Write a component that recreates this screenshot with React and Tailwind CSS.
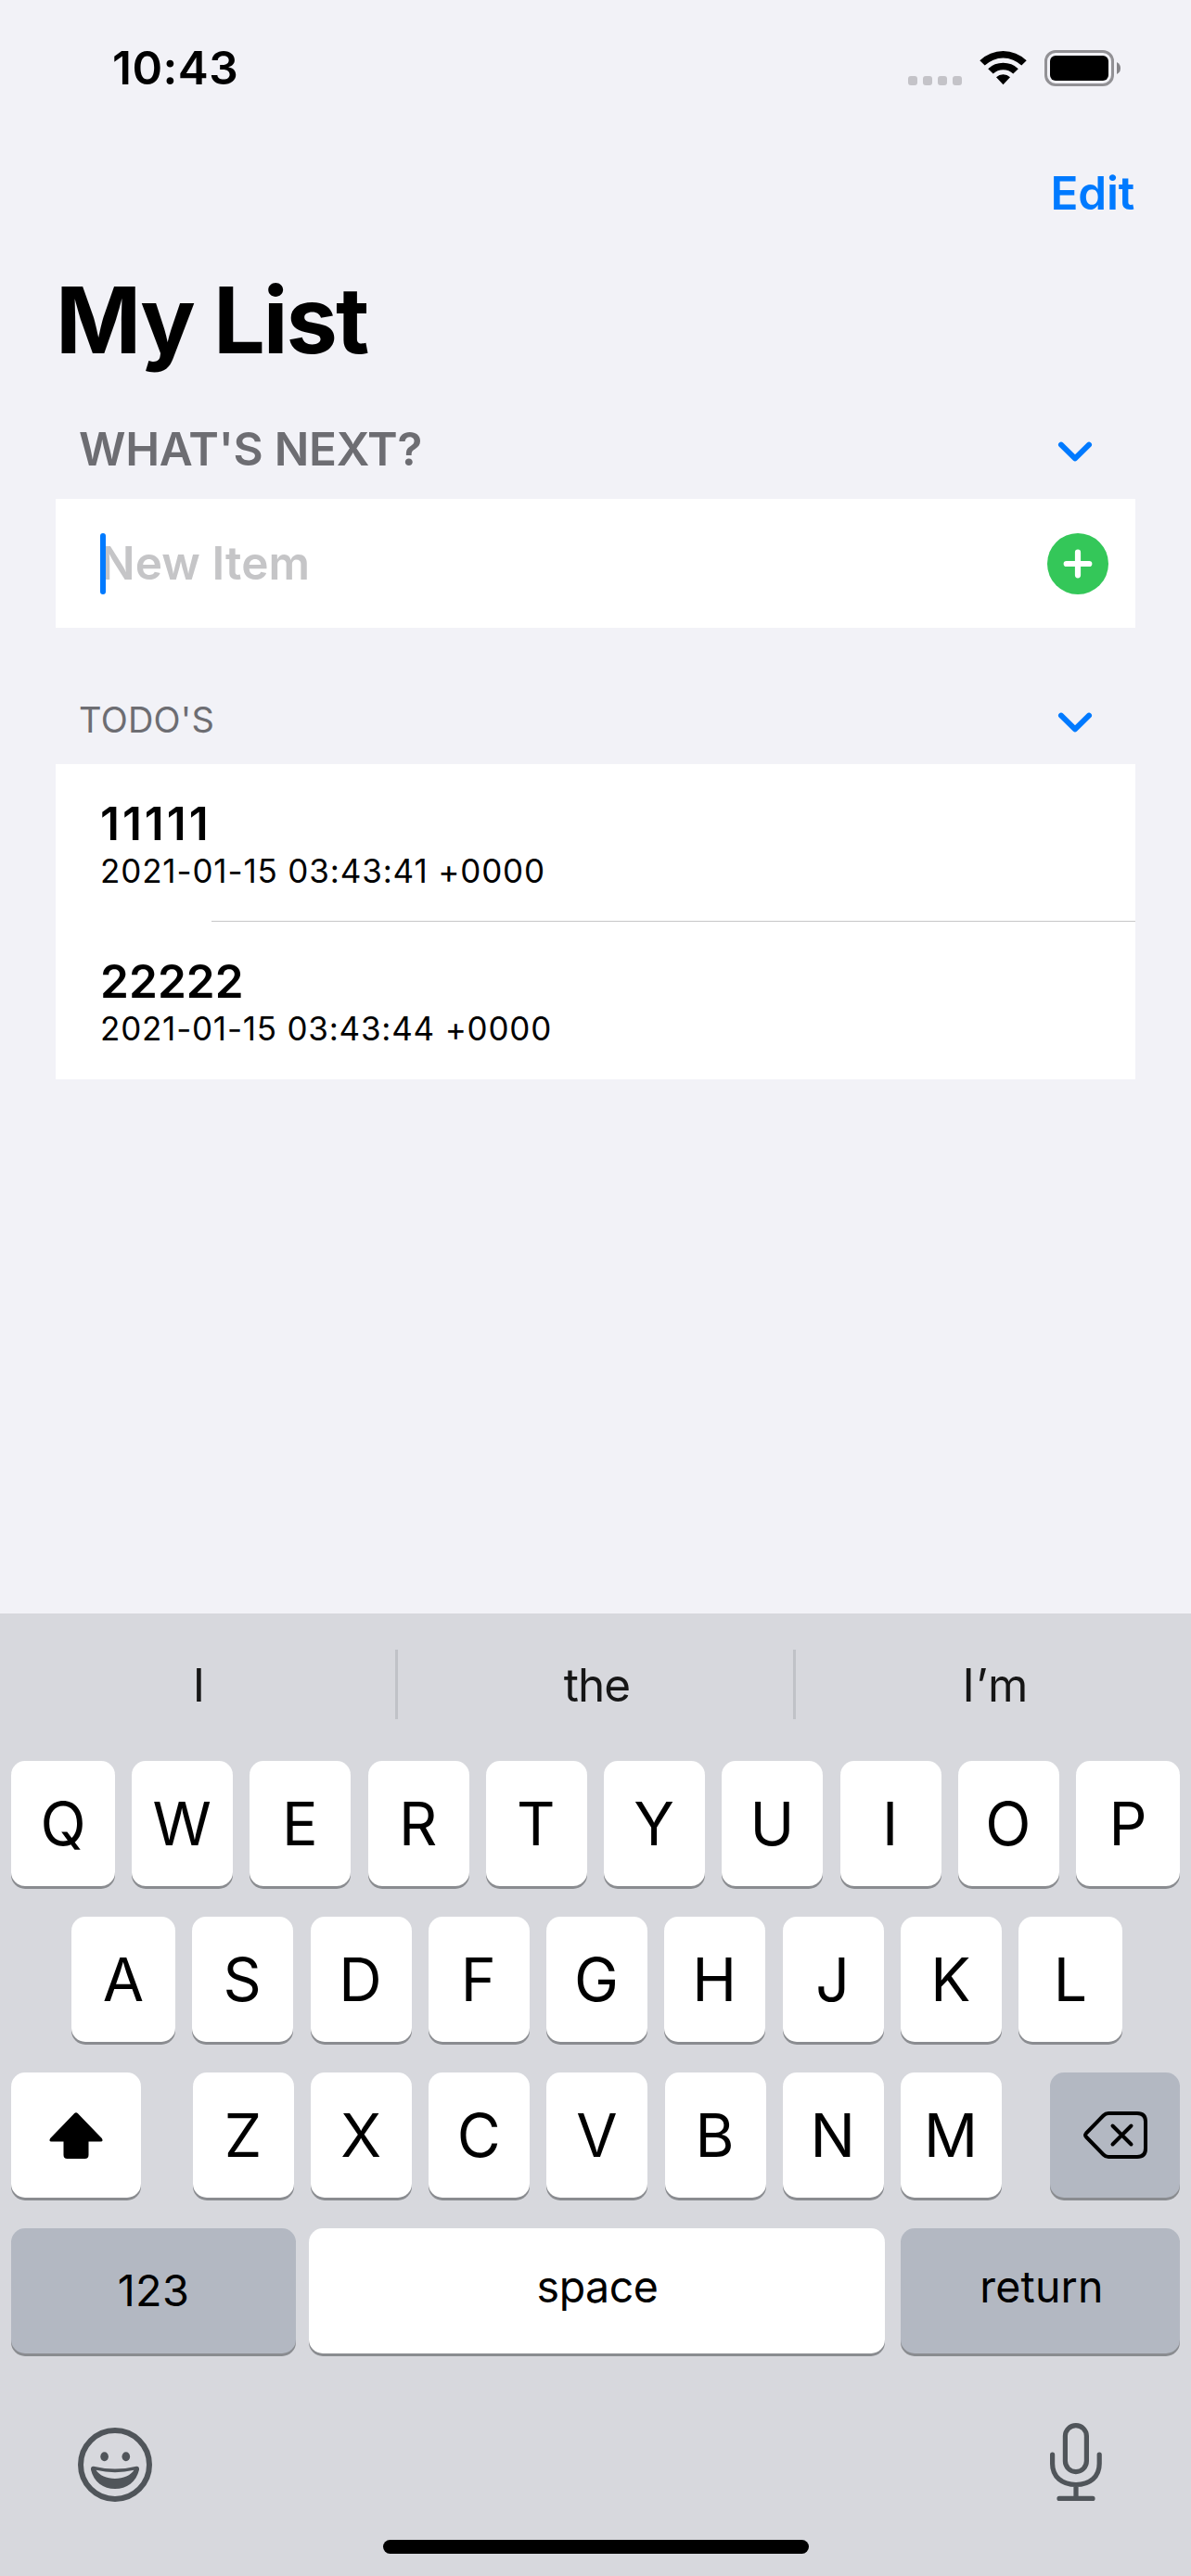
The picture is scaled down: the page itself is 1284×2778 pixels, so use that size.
const ROW1 = "QWERTYUIOP".split("");
const ROW2 = "ASDFGHJKL".split("");
const ROW3 = "ZXCVBNM".split("");

function Chevron() {
  return (
    <svg className="mr-[46px] mt-[6px] h-[22px] w-[38px]" viewBox="0 0 38 22" fill="none">
      <path d="M4 3.7 L19 18.4 L34 3.7" stroke="#007aff" strokeWidth="6" strokeLinecap="round" strokeLinejoin="round" />
    </svg>
  );
}

function Key({ children, className = "w-[109px] bg-white pt-px pr-px text-[64.3px]" }) {
  return (
    <div className={`flex h-[135px] shrink-0 items-center justify-center rounded-[15px] shadow-[0_3px_0_#8a8c90] ${className}`}>
      {children}
    </div>
  );
}

const WIDE = "w-[112px] bg-white pt-px text-[64.3px]";

function TodoRow({ title, date, titleClass, dateClass }) {
  return (
    <div className="h-[170px] pl-[48px] pt-[34px] text-black">
      <div className={`text-[49.5px] font-semibold leading-[60px] ${titleClass}`}>{title}</div>
      <div className={`-mt-px text-[35px] leading-[44px] ${dateClass}`}>{date}</div>
    </div>
  );
}

export default function App() {
  return (
    <div className="h-[2778px] w-[1284px] overflow-hidden bg-[#f2f2f7] font-['Inter',sans-serif] text-black">
      <main className="h-[1740px]">
        <div className="flex h-[146px] items-center pl-[121px] pr-[76px]">
          <span className="text-[49.5px] font-semibold tracking-[0.5px]">10:43</span>
          <div className="ml-auto flex items-center">
            <div className="mt-[27px] flex gap-[6px]">
              {[0, 1, 2, 3].map((i) => (
                <span key={i} className="size-[10px] rounded-[3px] bg-[#c4c3c8]" />
              ))}
            </div>
            <svg className="ml-[19px] h-[38px] w-[51px]" viewBox="0 0 51 38">
              <path d="M0.3 11.2 A36.5 36.5 0 0 1 50.7 11.2 L45.3 16.6 A28.5 28.5 0 0 0 5.7 16.6 Z M9.2 20.2 A23.5 23.5 0 0 1 41.8 20.2 L36.3 25.6 A15.6 15.6 0 0 0 14.7 25.6 Z M18 29.2 A11 11 0 0 1 33 29.2 L25.5 37.3 Z" />
            </svg>
            <div className="ml-[19px] h-[39px] w-[75px] rounded-[12px] border-[3px] border-[#929195] p-[3px]">
              <div className="h-full rounded-[6px] bg-black" />
            </div>
            <svg className="ml-[3px] h-[13px] w-[4px]" viewBox="0 0 4 13">
              <path d="M0 0 Q4 2 4 6.5 Q4 11 0 13 Z" fill="#858488" />
            </svg>
          </div>
        </div>

        <div className="flex h-[124px] items-center justify-end pr-[61px] text-[49.5px] font-semibold tracking-[-0.2px] text-[#007aff]">Edit</div>
        <h1 className="h-[150px] pl-[60px] text-[99px] font-bold leading-[150px] tracking-[-2.1px]">My List</h1>

        <section className="mt-[10px] px-[60px]">
          <div className="flex h-[108px] items-center justify-between pl-[25px]">
            <h2 className="text-[49.5px] font-semibold tracking-[-0.27px] text-[#6d6d72]">WHAT'S NEXT?</h2>
            <Chevron />
          </div>
          <div className="flex h-[139px] items-center bg-white pl-[48px] pr-[29px]">
            <div className="relative">
              <span className="text-[49.5px] font-semibold tracking-[0.1px] text-[#c5c5c7]">New Item</span>
              <span className="absolute left-0 top-1/2 h-[66px] w-[6px] -translate-y-1/2 rounded-full bg-[#007aff]" />
            </div>
            <svg className="ml-auto size-[66px]" viewBox="0 0 66 66">
              <circle cx="33" cy="33" r="33" fill="#34c759" />
              <path d="M33 20.7V45.3M20.7 33H45.3" stroke="#fff" strokeWidth="6.2" strokeLinecap="round" />
            </svg>
          </div>
        </section>

        <section className="mt-[51px] px-[60px]">
          <div className="flex h-[96px] items-center justify-between pl-[25px]">
            <h2 className="text-[38px] tracking-[0.23px] text-[#6d6d72]">TODO'S</h2>
            <Chevron />
          </div>
          <div className="bg-white">
            <TodoRow title="11111" date="2021-01-15 03:43:41 +0000" titleClass="tracking-[3px]" dateClass="tracking-[0.86px]" />
            <div className="-mt-px ml-[168px] h-px bg-[#c6c6c8]" />
            <TodoRow title="22222" date="2021-01-15 03:43:44 +0000" titleClass="tracking-[0.1px]" dateClass="tracking-[0.78px]" />
          </div>
        </section>
      </main>

      <section className="h-[1038px] bg-[#d7d8dd] px-[12px]">
        <div className="-mx-[12px] flex h-[159px] items-center pb-[6px] text-[49.5px] text-[#161616]">
          <span className="w-[426px] pl-[3px] pt-px text-center">I</span>
          <i className="h-[75px] w-[3px] bg-[#c0c2c7]" />
          <span className="w-[426px] pl-[3px] pt-px text-center tracking-[-0.9px]">the</span>
          <i className="h-[75px] w-[3px] bg-[#c0c2c7]" />
          <span className="w-[426px] pl-[5px] pt-px text-center tracking-[1.1px]">I’m</span>
        </div>

        <div className="flex flex-col gap-[33px]">
          <div className="flex justify-between">
            {ROW1.map((k, i) => (
              <Key key={k} className={i === 0 || i === 9 ? WIDE : undefined}>{k}</Key>
            ))}
          </div>
          <div className="flex justify-between pl-[65px] pr-[62px]">
            {ROW2.map((k, i) => (
              <Key key={k} className={i === 0 || i === 8 ? WIDE : undefined}>{k}</Key>
            ))}
          </div>
          <div className="flex">
            <Key className="w-[140px] bg-white">
              <svg className="mt-px h-[50px] w-[58px]" viewBox="0 0 58 50">
                <path d="M27 1.3 Q29 -0.6 31 1.3 L56.8 28 Q58.8 31.5 55.5 31.6 H42.5 V46 Q42.5 50 38.5 50 H19.5 Q15.5 50 15.5 46 V31.6 H2.5 Q-0.8 31.5 1.2 28 Z" />
              </svg>
            </Key>
            <div className="ml-[56px] flex w-[872px] justify-between">
              {ROW3.map((k) => (
                <Key key={k}>{k}</Key>
              ))}
            </div>
            <Key className="ml-auto w-[140px] bg-[#b3b8c2]">
              <svg className="h-[51px] w-[69px]" viewBox="0 0 69 51" fill="none" stroke="#000" strokeWidth="4" strokeLinecap="round" strokeLinejoin="round">
                <path d="M27 2 H58 Q67 2 67 11 V40 Q67 49 58 49 H27 Q24 49 21.5 46.5 L3 27.5 Q1.2 25.5 3 23.5 L21.5 4.5 Q24 2 27 2 Z" />
                <path d="M31.5 15.5 L51.5 35.5 M51.5 15.5 L31.5 35.5" />
              </svg>
            </Key>
          </div>
          <div className="flex">
            <Key className="w-[307px] bg-[#b3b8c2] text-[46.8px] tracking-[0.4px]">123</Key>
            <Key className="ml-[14px] w-[621px] bg-white pb-[8px] pl-px text-[46.5px] tracking-[-0.5px]">space</Key>
            <Key className="ml-[17px] w-[301px] bg-[#b3b8c2] pb-[8px] pl-[3px] text-[46.5px] tracking-[0.2px]">return</Key>
          </div>
        </div>

        <div className="mt-[75px] flex h-[84px] justify-between pl-[72px] pr-[84px]">
          <svg className="mt-[5px] size-[80px]" viewBox="0 0 80 80">
            <circle cx="40" cy="40" r="37" fill="none" stroke="#50555a" strokeWidth="6" />
            <ellipse cx="28.6" cy="31.3" rx="4.3" ry="5" fill="#50555a" />
            <ellipse cx="51.8" cy="31.3" rx="4.3" ry="5" fill="#50555a" />
            <path fillRule="evenodd" fill="#50555a" d="M17 41.7 Q40 47.5 63 41.7 Q66.5 41.5 66 45.5 C63 58.5 52.5 66 40 66 C27.5 66 17 58.5 14 45.5 Q13.5 41.5 17 41.7 Z M19.5 45.8 C23 51.5 31 55 40 55 C49 55 57 51.5 60.5 45.8 Q40 50.5 19.5 45.8 Z" />
          </svg>
          <svg className="h-[84px] w-[56px]" viewBox="0 0 56 84" fill="none" stroke="#50555a" strokeWidth="5.2" strokeLinecap="round">
            <rect x="16.4" y="2.6" width="23" height="50" rx="11.5" />
            <path d="M2.6 34 V44 C2.6 58 13 66.5 28 66.5 C43 66.5 53.2 58 53.2 44 V34 M28 67 V81 M10 81.4 H46" />
          </svg>
        </div>
        <div className="mx-auto mt-[42px] h-[15px] w-[459px] rounded-full bg-black" />
      </section>
    </div>
  );
}
